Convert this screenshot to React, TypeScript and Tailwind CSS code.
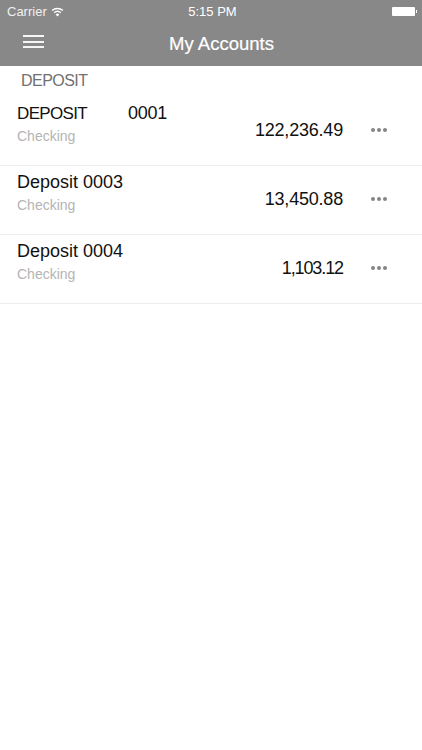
const font = "font-['Liberation_Sans',Arial,sans-serif]";

function Row({ name, amount, amountClass }: { name: React.ReactNode; amount: string; amountClass: string }) {
  return (
    <div className="h-[69px] border-b border-[#ececec] flex">
      <div className="pl-[17px] pt-[5px] flex-1">
        <div className="h-[22px] text-[18px] leading-[22px] text-[#111] whitespace-pre">{name}</div>
        <div className="mt-[3px] text-[14px] leading-[18px] text-[#b4b4b4]">Checking</div>
      </div>
      <div className={`pt-[22px] text-[18px] leading-[22px] text-[#111] ${amountClass}`}>{amount}</div>
      <div className="w-[79px] pl-[28px] pt-[31px]">
        <div className="flex gap-[2px]">
          <span className="w-[4px] h-[4px] rounded-full bg-[#858585]" />
          <span className="w-[4px] h-[4px] rounded-full bg-[#858585]" />
          <span className="w-[4px] h-[4px] rounded-full bg-[#858585]" />
        </div>
      </div>
    </div>
  );
}

export default function App() {
  return (
    <div className={`w-[422px] h-[750px] bg-white overflow-hidden ${font}`}>
      <div className="h-[66px] bg-[#888888] text-white">
        <div className="h-[22px] pl-[7px] pr-[5px] pt-[1px] flex items-center justify-between text-[13px] relative">
          <div className="flex items-center gap-[4px]">
            <span className="text-[#f0f0f0]">Carrier</span>
            <svg width="13" height="10" viewBox="0 0 13 10" fill="white">
              <path d="M6.5 9.6 4.6 7.4a2.8 2.8 0 0 1 3.8 0L6.5 9.6Z" />
              <path d="M3.6 6.3 2.7 5.2a5.8 5.8 0 0 1 7.6 0l-.9 1.1a4.4 4.4 0 0 0-5.8 0Z" />
              <path d="M1.6 4 .6 2.9a8.9 8.9 0 0 1 11.8 0L11.4 4a7.4 7.4 0 0 0-9.8 0Z" />
            </svg>
          </div>
          <span className="absolute left-[3px] right-0 text-center">5:15 PM</span>
          <div className="flex items-center">
            <div className="w-[23px] h-[9px] bg-white rounded-[1px]" />
            <div className="w-[1px] h-[3px] bg-white ml-[1px]" />
          </div>
        </div>
        <div className="h-[44px] relative flex items-center justify-center">
          <div className="absolute left-[23px] top-[13px] w-[21px] flex flex-col gap-[3.5px]">
            <span className="h-[2px] bg-[#f5f5f5]" />
            <span className="h-[2px] bg-[#f5f5f5]" />
            <span className="h-[2px] bg-[#f5f5f5]" />
          </div>
          <span className="text-[18.5px] ml-[21px] mt-[-1px] [-webkit-text-stroke:0.2px_white]">My Accounts</span>
        </div>
      </div>
      <div className="h-[31px] pl-[21px] pt-[5px] text-[16px] leading-[20px] tracking-[-0.55px] text-[#707070]">DEPOSIT</div>
      <Row
        name={
          <span className="flex items-baseline">
            <span className="w-[111px] text-[17px] tracking-[-0.65px]">DEPOSIT</span>
            <span className="tracking-[-0.25px]">0001</span>
          </span>
        }
        amount="122,236.49"
        amountClass="tracking-[-0.2px]"
      />
      <Row name="Deposit 0003" amount="13,450.88" amountClass="tracking-[-0.2px]" />
      <Row name="Deposit 0004" amount="1,103.12" amountClass="tracking-[-1.1px]" />
    </div>
  );
}
